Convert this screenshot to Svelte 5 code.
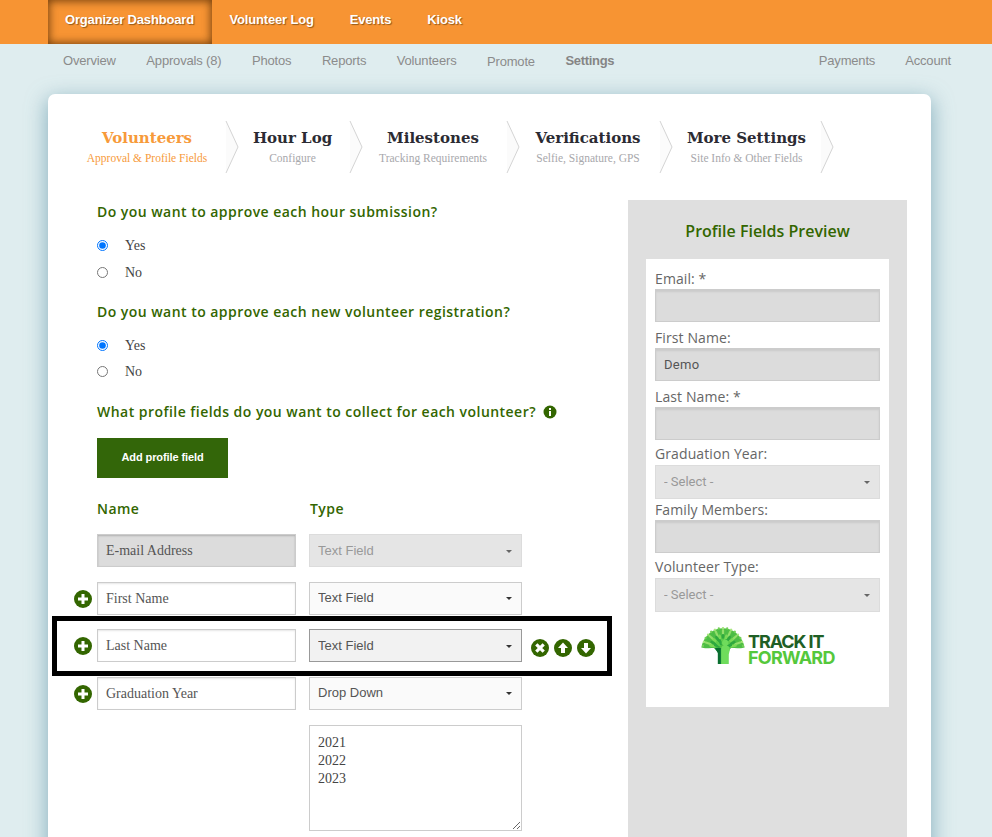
<script>
  const tabs = ['Organizer Dashboard', 'Volunteer Log', 'Events', 'Kiosk'];
  const subLeft = ['Overview', 'Approvals (8)', 'Photos', 'Reports', 'Volunteers', 'Promote', 'Settings'];
  const subRight = ['Payments', 'Account'];
  const steps = [
    { t: 'Volunteers', s: 'Approval & Profile Fields', w: 158, pr: 0 },
    { t: 'Hour Log', s: 'Configure', w: 112, pr: 3 },
    { t: 'Milestones', s: 'Tracking Requirements', w: 145, pr: 3 },
    { t: 'Verifications', s: 'Selfie, Signature, GPS', w: 141, pr: 3 },
    { t: 'More Settings', s: 'Site Info & Other Fields', w: 149, pr: 0 }
  ];
  const rows = [
    { name: 'First Name', type: 'Text Field' },
    { name: 'Last Name', type: 'Text Field', hot: true },
    { name: 'Graduation Year', type: 'Drop Down' }
  ];
  // Fans of small standing figures that form the canopy of the logo tree.
  const fan = (radius, count, span) =>
    Array.from({ length: count }, (_, i) => -span + (2 * span * i) / (count - 1)).map((a) => ({ a, radius }));
  const outer = fan(25, 15, 84);
  const middle = fan(18, 11, 78);
  const inner = fan(11, 7, 70);
</script>

{#snippet round(kind)}
  <svg class="ic" viewBox="0 0 18 18" aria-hidden="true">
    <circle cx="9" cy="9" r="9" fill="#336600" />
    {#if kind === 'plus'}
      <path d="M9 4v10M4 9h10" stroke="#fff" stroke-width="3" />
    {:else if kind === 'x'}
      <path d="M5.3 5.3l7.4 7.4M12.7 5.3l-7.4 7.4" stroke="#fff" stroke-width="3.2" />
    {:else if kind === 'up'}
      <path d="M9 3.5L14 9h-3v5H7V9H4z" fill="#fff" />
    {:else}
      <path d="M9 14.5L14 9h-3V4H7v5H4z" fill="#fff" />
    {/if}
  </svg>
{/snippet}

<div class="page">
  <nav class="top">
    {#each tabs as t, i}
      <a class="tab" class:active={i === 0}>{t}</a>
    {/each}
  </nav>

  <nav class="sub">
    <div class="subgroup">
      {#each subLeft as s}
        <a class:cur={s === 'Settings'} class:low={s === 'Promote'}>{s}</a>
      {/each}
    </div>
    <div class="subgroup right">
      {#each subRight as s}
        <a>{s}</a>
      {/each}
    </div>
  </nav>

  <main class="card">
    <div class="steps">
      {#each steps as s, i}
        <div class="step" class:on={i === 0} style:width="{s.w}px" style:padding-right="{s.pr}px">
          <div class="st">{s.t}</div>
          <div class="ss">{s.s}</div>
        </div>
        <svg class="chev" viewBox="0 0 12 52" aria-hidden="true">
          <path d="M0 0L12 26L0 52z" fill="#fbfbfb" />
          <path d="M0 0L12 26L0 52" fill="none" stroke="#d4d4d4" stroke-width="1" />
        </svg>
      {/each}
    </div>

    <div class="cols">
      <section class="left">
        <h3>Do you want to approve each hour submission?</h3>
        <div class="radios">
          <label><input type="radio" name="a" checked /><span>Yes</span></label>
          <label><input type="radio" name="a" /><span>No</span></label>
        </div>
        <h3 class="q">Do you want to approve each new volunteer registration?</h3>
        <div class="radios tight">
          <label><input type="radio" name="b" checked /><span>Yes</span></label>
          <label><input type="radio" name="b" /><span>No</span></label>
        </div>
        <h3 class="q q3">
          What profile fields do you want to collect for each volunteer?
          <svg class="info" viewBox="0 0 14 14" aria-hidden="true">
            <circle cx="7" cy="7" r="6.5" fill="#336600" />
            <rect x="6" y="3" width="2" height="2" fill="#fff" />
            <rect x="6" y="6" width="2" height="5" fill="#fff" />
          </svg>
        </h3>
        <button class="add">Add profile field</button>

        <div class="heads">
          <h3 class="hn">Name</h3>
          <h3>Type</h3>
        </div>

        <div class="grid">
          <div class="row">
            <input class="name locked" value="E-mail Address" readonly />
            <div class="selwrap disabled"><select disabled><option>Text Field</option></select></div>
          </div>
          {#each rows as r}
            <div class="row">
              <span class="addbtn">{@render round('plus')}</span>
              <input class="name" value={r.name} readonly />
              <div class="selwrap" class:focus={r.hot}><select><option>{r.type}</option></select></div>
              {#if r.hot}
                <div class="acts">
                  {@render round('x')}
                  {@render round('up')}
                  {@render round('down')}
                </div>
                <div class="hilite"></div>
              {/if}
            </div>
          {/each}
          <div class="row tall">
            <textarea readonly>{'2021\n2022\n2023'}</textarea>
          </div>
        </div>
      </section>

      <aside class="panel">
        <h4>Profile Fields Preview</h4>
        <div class="sheet">
          <label class="pl">Email: *</label>
          <input class="pi gap5" readonly />
          <label class="pl">First Name:</label>
          <input class="pi gap5" value="Demo" readonly />
          <label class="pl">Last Name: *</label>
          <input class="pi gap3" readonly />
          <label class="pl">Graduation Year:</label>
          <div class="selwrap disabled pv"><select disabled><option>- Select -</option></select></div>
          <label class="pl">Family Members:</label>
          <input class="pi gap3" readonly />
          <label class="pl">Volunteer Type:</label>
          <div class="selwrap disabled pv"><select disabled><option>- Select -</option></select></div>

          <div class="logo">
            <svg class="tree" width="44" height="37" viewBox="0 0 68 58" aria-hidden="true">
              <path d="M0 32C4 13 19 2 34 2s30 11 34 30c-8 2-15 1-22 1l-7 6H29l-7-6c-7 0-14 1-22-1z" fill="#4fc043" />
              {#each outer as f, i}
                <g transform="translate(34 33) rotate({f.a})">
                  <rect x="-1.7" y={-f.radius - 5} width="3.4" height="12" rx="1.7" fill={i % 2 ? '#93de6c' : '#4cbb48'} />
                  <circle cy={-f.radius - 6.5} r="1.8" fill={i % 2 ? '#a9e77f' : '#74d058'} />
                </g>
              {/each}
              {#each middle as f, i}
                <g transform="translate(34 33) rotate({f.a})">
                  <rect x="-2" y={-f.radius - 4} width="4" height="11" rx="2" fill={i % 2 ? '#2fa83f' : '#7ad957'} />
                </g>
              {/each}
              {#each inner as f, i}
                <g transform="translate(34 33) rotate({f.a})">
                  <rect x="-2.2" y={-f.radius - 4} width="4.4" height="10" rx="2.2" fill={i % 2 ? '#5ccb4c' : '#2caa41'} />
                </g>
              {/each}
              <path d="M20 33h26l-4 7v18H26V40z" fill="#138a3a" />
              <path d="M22 33h8v25h-4V41z" fill="#0a6e30" />
              <path d="M31 58V35c0-3 1-5 4-6a5 5 0 1 1 5 0c3 1 5 3 5 6l-2 8v15z" fill="#6fdc5c" />
            </svg>
            <div class="wordmark">
              <span class="w1">TRACK IT</span>
              <span class="w2">FORWARD</span>
            </div>
          </div>
        </div>
      </aside>
    </div>
  </main>
</div>

<style>
  :global(body) { margin: 0; background: #dfedef; overflow: hidden; }
  .page { height: 837px; overflow: hidden; font-family: "Liberation Sans", Arial, sans-serif; }

  .top { height: 44px; background: #f79433; display: flex; padding-left: 48px; }
  .tab {
    padding: 0 18px; line-height: 39px; color: #fff; font-size: 13px; font-weight: 700; letter-spacing: -.17px;
    white-space: nowrap; text-shadow: 1px 1px 1px rgba(70, 40, 0, .55);
  }
  .tab.active { box-sizing: border-box; width: 164px; padding: 0 0 0 17px; box-shadow: inset 0 0 8px 1px rgba(70, 35, 0, .75); }
  .tab.active + .tab { padding-left: 17.5px; }

  .sub { height: 50px; display: flex; justify-content: space-between; padding: 0 41px 0 63px; }
  .subgroup { display: flex; gap: 30.5px; }
  .subgroup.right { gap: 30px; }
  .sub a { font-size: 13px; line-height: 34px; color: #8b8b8b; letter-spacing: -.17px; }
  .sub a.cur { font-weight: 700; color: #858585; letter-spacing: -.3px; }
  .sub a.low { line-height: 36px; }

  .card {
    margin: 0 61px 0 48px; height: 760px; background: #fff; border-radius: 7px 7px 0 0;
    box-shadow: 0 6px 20px 2px rgba(90, 145, 165, .6); padding: 27px 24px 0 20px;
  }
  .steps { display: flex; height: 52px; }
  .step { flex: none; text-align: center; padding-top: 7px; box-sizing: border-box; }
  .chev { flex: none; width: 12px; height: 52px; overflow: visible; }
  .st { font: 700 15px/20px "DejaVu Serif", Georgia, serif; color: #2b2b33; }
  .ss { font: 11.5px/16px "Liberation Serif", Georgia, serif; color: #a8a8ac; margin-top: 2px; white-space: nowrap; }
  .on .st, .on .ss { color: #f79a3a; }

  .cols { display: flex; justify-content: space-between; margin-top: 27px; padding-left: 29px; }
  .left { width: 516px; }
  h3 {
    margin: 0; font: 600 14px/24px "Open Sans", sans-serif; color: #336600; letter-spacing: .46px;
  }
  .q { margin-top: 15px; }
  .q3 { margin-top: 16px; white-space: nowrap; }
  .info { width: 14px; height: 14px; vertical-align: -2px; margin-left: 3px; }
  .radios { margin-top: 7px; }
  .radios label {
    display: flex; align-items: center; height: 27px; box-sizing: border-box; padding-top: 2px;
    font: 14px "Liberation Serif", Georgia, serif; color: #444;
  }
  .radios.tight label:last-child { height: 26px; }
  .radios input { margin: 0 17px 1px 0; width: 11px; height: 11px; }
  .add {
    display: block; margin-top: 14px; width: 131px; height: 40px; border: 0; background: #336609; color: #fff;
    font: 700 11px "Liberation Sans", Arial, sans-serif; letter-spacing: -.1px; padding: 0 0 3px;
  }
  .heads { display: flex; margin-top: 19px; }
  .hn { width: 213px; }
  .grid { margin-top: 13px; display: flex; flex-direction: column; gap: 14.67px; }
  .row { position: relative; display: flex; gap: 13px; height: 33px; }
  .row.tall { height: 106px; padding-left: 212px; }
  .name {
    box-sizing: border-box; width: 199px; height: 100%; padding: 1px 8px 0; border: 1px solid #ccc; outline: 0;
    font: 14px "Liberation Serif", Georgia, serif; color: #555; background: #fff;
    box-shadow: inset 0 1px 2px rgba(0, 0, 0, .1);
  }
  .name.locked { padding-top: 0; background: #dcdcdc; box-shadow: inset 0 1px 2px rgba(0, 0, 0, .2); }
  .selwrap { position: relative; width: 213px; height: 100%; }
  .selwrap::after {
    content: ""; position: absolute; right: 10px; top: 50%; margin-top: -1px;
    border: 3px solid transparent; border-top-color: #333; border-bottom: 0;
  }
  .selwrap select {
    appearance: none; box-sizing: border-box; width: 100%; height: 100%; padding: 0 8px 1px; border: 1px solid #ccc;
    border-radius: 0; outline: 0; background: #fafafa; color: #555; opacity: 1;
    font: 13px "Liberation Sans", Arial, sans-serif;
  }
  .selwrap.disabled select { background: #e5e5e5; color: #999; border-color: #dcdcdc; }
  .selwrap.disabled::after { border-top-color: #666; }
  .selwrap.focus select { background: #f2f2f2; border-color: #999; }
  .addbtn { position: absolute; left: -23px; top: 8px; height: 18px; }
  .ic { display: block; width: 18px; height: 18px; flex: none; }
  .acts { position: absolute; left: 434px; top: 10px; display: flex; gap: 5px; }
  .hilite {
    position: absolute; left: -45px; top: -13.33px; height: 60px;
    width: 560px; box-sizing: border-box; border: 5px solid #000; pointer-events: none;
  }
  textarea {
    box-sizing: border-box; width: 213px; height: 106px; padding: 8px; border: 1px solid #ccc; outline: 0; border-radius: 0;
    font: 14px/18px "Liberation Serif", Georgia, serif; color: #444; background: #fff; resize: both;
  }

  .panel { width: 279px; height: 640px; background: #dfdfdf; flex: none; }
  h4 {
    margin: 0; height: 59px; text-align: center; font: 600 16px/62px "Open Sans", sans-serif; color: #336600;
  }
  .sheet { width: 243px; height: 448px; margin-left: 18px; background: #fff; box-sizing: border-box; padding: 9px 9px 0; }
  .pl { display: block; height: 20px; font: 14px/22px "Open Sans", sans-serif; color: #666; letter-spacing: .1px; }
  .pi {
    display: block; box-sizing: border-box; width: 225px; height: 33px; margin-top: 1px; padding: 0 8px 1px; border: 1px solid #ccc;
    background: #dcdcdc; outline: 0; font: 13px "Roboto", sans-serif; color: #555; letter-spacing: .3px;
    box-shadow: inset 0 2px 2px rgba(0, 0, 0, .08);
  }
  .gap5 { margin-bottom: 5px; }
  .gap3 { margin-bottom: 3px; }
  .pv { width: 225px; height: 34px; margin-top: 2px; }
  .pv select { font: 13px "Roboto", sans-serif; }
  .logo { display: flex; align-items: flex-start; margin: 15px 0 0 46px; height: 38px; gap: 3px; }
  .tree { display: block; flex: none; filter: blur(.3px); }
  .wordmark { display: flex; flex-direction: column; font-family: "Inter", sans-serif; font-weight: 700; padding-top: 6.5px; }
  .w1 { font-size: 18px; line-height: 16px; color: #1f5f25; letter-spacing: -1.1px; white-space: nowrap; }
  .w2 { font-size: 18px; line-height: 16px; color: #55c83c; letter-spacing: -.75px; }
</style>
